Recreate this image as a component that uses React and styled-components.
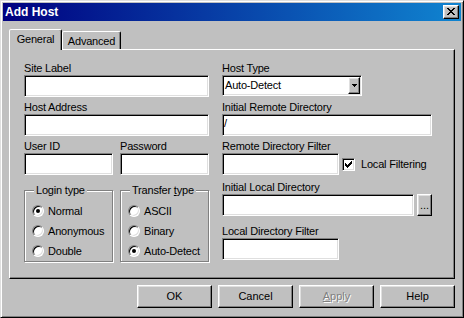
import React from "react";
import styled, { createGlobalStyle, css } from "styled-components";

const GlobalStyle = createGlobalStyle`
  html, body { margin: 0; padding: 0; background: #c0c0c0; }
  body {
    font-family: "Liberation Sans", Arial, sans-serif;
    font-size: 11px;
    letter-spacing: -0.2px;
    color: #000;
  }
  *, *::before, *::after { box-sizing: border-box; }
`;

const raised = css`
  border: 1px solid;
  border-color: #fff #000 #000 #fff;
  box-shadow: inset -1px -1px 0 #808080, inset 1px 1px 0 #dfdfdf;
  background: #c0c0c0;
`;

const sunken = css`
  border: 1px solid;
  border-color: #808080 #fff #fff #808080;
  box-shadow: inset 1px 1px 0 #000, inset -1px -1px 0 #dfdfdf;
`;

const Window = styled.div`
  width: 464px;
  height: 318px;
  display: flex;
  flex-direction: column;
  background: #c0c0c0;
  border: 1px solid;
  border-color: #dfdfdf #000 #000 #dfdfdf;
  box-shadow: inset 1px 1px 0 #fff, inset -1px -1px 0 #808080;
  padding: 2px;
`;

const TitleBar = styled.div`
  flex: 0 0 18px;
  height: 18px;
  display: flex;
  align-items: center;
  padding: 0 2px;
  background: linear-gradient(90deg, #000080, #1084d0);
`;

const Title = styled.span`
  color: #fff;
  font-weight: bold;
  font-size: 12px;
  line-height: 14px;
  letter-spacing: 0;
  white-space: nowrap;
`;

const TitleButton = styled.div`
  ${raised}
  width: 16px;
  height: 14px;
  margin-left: auto;
  display: flex;
  align-items: center;
  justify-content: center;
  padding: 0 1px 1px 0;
`;

const Body = styled.div`
  flex: 1;
  display: flex;
  flex-direction: column;
  padding: 8px 6px 7px 6px;
`;

const TabStrip = styled.div`
  display: flex;
  align-items: flex-end;
  height: 20px;
  flex: 0 0 20px;
  position: relative;
  z-index: 1;
`;

const Tab = styled.div`
  width: ${(p) => p.$w}px;
  height: ${(p) => (p.$active ? 21 : 18)}px;
  margin-bottom: ${(p) => (p.$active ? -1 : 0)}px;
  background: #c0c0c0;
  border: 1px solid;
  border-bottom: none;
  border-color: #fff #000 transparent #fff;
  border-radius: 2px 2px 0 0;
  box-shadow: inset -1px 0 0 #808080;
  padding-top: 3px;
  text-align: center;
  line-height: 13px;
  white-space: nowrap;
`;

const Panel = styled.div`
  flex: 0 0 230px;
  height: 230px;
  border: 1px solid;
  border-color: #fff #000 #000 #fff;
  box-shadow: inset -1px -1px 0 #808080;
  padding: 12px 0 0 14px;
  display: flex;
  gap: 13px;
`;

const Column = styled.div`
  width: ${(p) => p.$w}px;
  display: flex;
  flex-direction: column;
`;

const Field = styled.div`
  display: flex;
  flex-direction: column;
  margin-bottom: ${(p) => p.$mb || 0}px;
`;

const Label = styled.div`
  height: 13px;
  line-height: 13px;
  white-space: nowrap;
`;

const TextBox = styled.input.attrs({ readOnly: true, type: "text" })`
  ${sunken}
  display: block;
  width: ${(p) => p.$w}px;
  height: 22px;
  margin: 0;
  padding: 1px 1px 6px 1px;
  background: #fff;
  font: inherit;
  line-height: 13px;
  color: #000;
  outline: none;
`;

const Row = styled.div`
  display: flex;
  align-items: ${(p) => p.$align || "center"};
  gap: ${(p) => p.$gap || 0}px;
  margin-bottom: ${(p) => p.$mb || 0}px;
  margin-top: ${(p) => p.$mt || 0}px;
`;

const Combo = styled.div`
  ${sunken}
  width: ${(p) => p.$w}px;
  height: 21px;
  background: #fff;
  display: flex;
  padding: 1px;
`;

const ComboText = styled.span`
  flex: 1;
  line-height: 17px;
  padding-left: 1px;
  white-space: nowrap;
`;

const ComboButton = styled.span`
  ${raised}
  width: 12px;
  height: 17px;
  display: flex;
  align-items: center;
  justify-content: center;
`;

const CheckBox = styled.span`
  ${sunken}
  width: 13px;
  height: 13px;
  flex: 0 0 13px;
  background: #fff;
  display: flex;
  align-items: center;
  justify-content: center;
  margin-left: 3px;
`;

const CheckLabel = styled.span`
  margin-left: 6px;
  line-height: 13px;
  white-space: nowrap;
`;

const BrowseButton = styled.button`
  ${raised}
  width: 15px;
  height: 22px;
  margin: 0;
  padding: 0;
  font: inherit;
  line-height: 13px;
  color: #000;
`;

const GroupBox = styled.div`
  position: relative;
  width: 89px;
  height: 72px;
  border: 1px solid #808080;
  box-shadow: inset 1px 1px 0 #fff, 1px 1px 0 #fff;
  padding: 10px 0 0 7px;
  display: flex;
  flex-direction: column;
`;

const Legend = styled.span`
  position: absolute;
  top: -7px;
  left: 9px;
  padding: 0 2px;
  background: #c0c0c0;
  line-height: 13px;
  white-space: nowrap;
`;

const RadioRow = styled.div`
  height: 20px;
  display: flex;
  align-items: center;
  gap: 4px;
  white-space: nowrap;
  line-height: 13px;
`;

const RadioCircle = styled.span`
  position: relative;
  width: 12px;
  height: 12px;
  flex: 0 0 12px;
  border-radius: 50%;
  background: #fff;
  border: 1px solid;
  border-color: #808080 #fff #fff #808080;
  box-shadow: inset 1px 1px 0 #000, inset -1px -1px 0 #dfdfdf;
  ${(p) =>
    p.$checked &&
    css`
      &::after {
        content: "";
        position: absolute;
        left: 3px;
        top: 3px;
        width: 4px;
        height: 4px;
        border-radius: 50%;
        background: #000;
      }
    `}
`;

const ButtonBar = styled.div`
  margin-top: 6px;
  display: flex;
  justify-content: flex-end;
  gap: 6px;
`;

const PushButton = styled.button`
  ${raised}
  width: 75px;
  height: 23px;
  margin: 0;
  padding: 0;
  font: inherit;
  line-height: 13px;
  color: ${(p) => (p.disabled ? "#808080" : "#000")};
  text-shadow: ${(p) => (p.disabled ? "1px 1px 0 #fff" : "none")};
`;

const PixelGlyph = ({ rows, color = "#000" }) => (
  <svg
    width={rows[0].length}
    height={rows.length}
    viewBox={`0 0 ${rows[0].length} ${rows.length}`}
    shapeRendering="crispEdges"
    aria-hidden="true"
    style={{ display: "block" }}
  >
    {rows.flatMap((row, y) =>
      row
        .split("")
        .map((c, x) =>
          c === "#" ? (
            <rect key={`${x}-${y}`} x={x} y={y} width="1" height="1" fill={color} />
          ) : null
        )
    )}
  </svg>
);

const CLOSE_X = [
  "##....##",
  ".##..##.",
  "..####..",
  "...##...",
  "..####..",
  ".##..##.",
  "##....##",
];

const CHECK = [
  "......#",
  ".....##",
  "#...###",
  "##.###.",
  "#####..",
  ".###...",
  "..#....",
];

const ARROW = ["#####", ".###.", "..#.."];

const Radio = ({ checked, children }) => (
  <RadioRow>
    <RadioCircle $checked={checked} />
    <span>{children}</span>
  </RadioRow>
);

export default function App() {
  return (
    <>
      <GlobalStyle />
      <Window>
        <TitleBar>
          <Title>Add Host</Title>
          <TitleButton>
            <PixelGlyph rows={CLOSE_X} />
          </TitleButton>
        </TitleBar>
        <Body>
          <TabStrip>
            <Tab $active $w={53}>General</Tab>
            <Tab $w={59}>Advanced</Tab>
          </TabStrip>
          <Panel>
            <Column $w={185}>
              <Field $mb={4}>
                <Label>Site Label</Label>
                <TextBox $w={185} value="" />
              </Field>
              <Field $mb={4}>
                <Label>Host Address</Label>
                <TextBox $w={185} value="" />
              </Field>
              <Row $gap={7} $align="flex-start">
                <Field>
                  <Label>User ID</Label>
                  <TextBox $w={89} value="" />
                </Field>
                <Field>
                  <Label>Password</Label>
                  <TextBox $w={89} value="" />
                </Field>
              </Row>
              <Row $gap={7} $mt={15} $align="flex-start">
                <GroupBox>
                  <Legend>Login type</Legend>
                  <Radio checked>Normal</Radio>
                  <Radio>Anonymous</Radio>
                  <Radio>Double</Radio>
                </GroupBox>
                <GroupBox>
                  <Legend>
                    Transfer <u>t</u>ype
                  </Legend>
                  <Radio>ASCII</Radio>
                  <Radio>Binary</Radio>
                  <Radio checked>Auto-Detect</Radio>
                </GroupBox>
              </Row>
            </Column>
            <Column $w={210}>
              <Field $mb={5}>
                <Label>Host Type</Label>
                <Combo $w={140}>
                  <ComboText>Auto-Detect</ComboText>
                  <ComboButton>
                    <PixelGlyph rows={ARROW} />
                  </ComboButton>
                </Combo>
              </Field>
              <Field $mb={4}>
                <Label>Initial Remote Directory</Label>
                <TextBox $w={210} value="/" />
              </Field>
              <Field $mb={6}>
                <Label>Remote Directory Filter</Label>
                <Row>
                  <TextBox $w={117} value="" />
                  <CheckBox>
                    <PixelGlyph rows={CHECK} />
                  </CheckBox>
                  <CheckLabel>Local Filtering</CheckLabel>
                </Row>
              </Field>
              <Field $mb={9}>
                <Label>Initial Local Directory</Label>
                <Row $gap={3}>
                  <TextBox $w={192} value="" />
                  <BrowseButton>...</BrowseButton>
                </Row>
              </Field>
              <Field>
                <Label>Local Directory Filter</Label>
                <TextBox $w={117} value="" />
              </Field>
            </Column>
          </Panel>
          <ButtonBar>
            <PushButton>OK</PushButton>
            <PushButton>Cancel</PushButton>
            <PushButton disabled>
              <u>A</u>pply
            </PushButton>
            <PushButton>Help</PushButton>
          </ButtonBar>
        </Body>
      </Window>
    </>
  );
}
